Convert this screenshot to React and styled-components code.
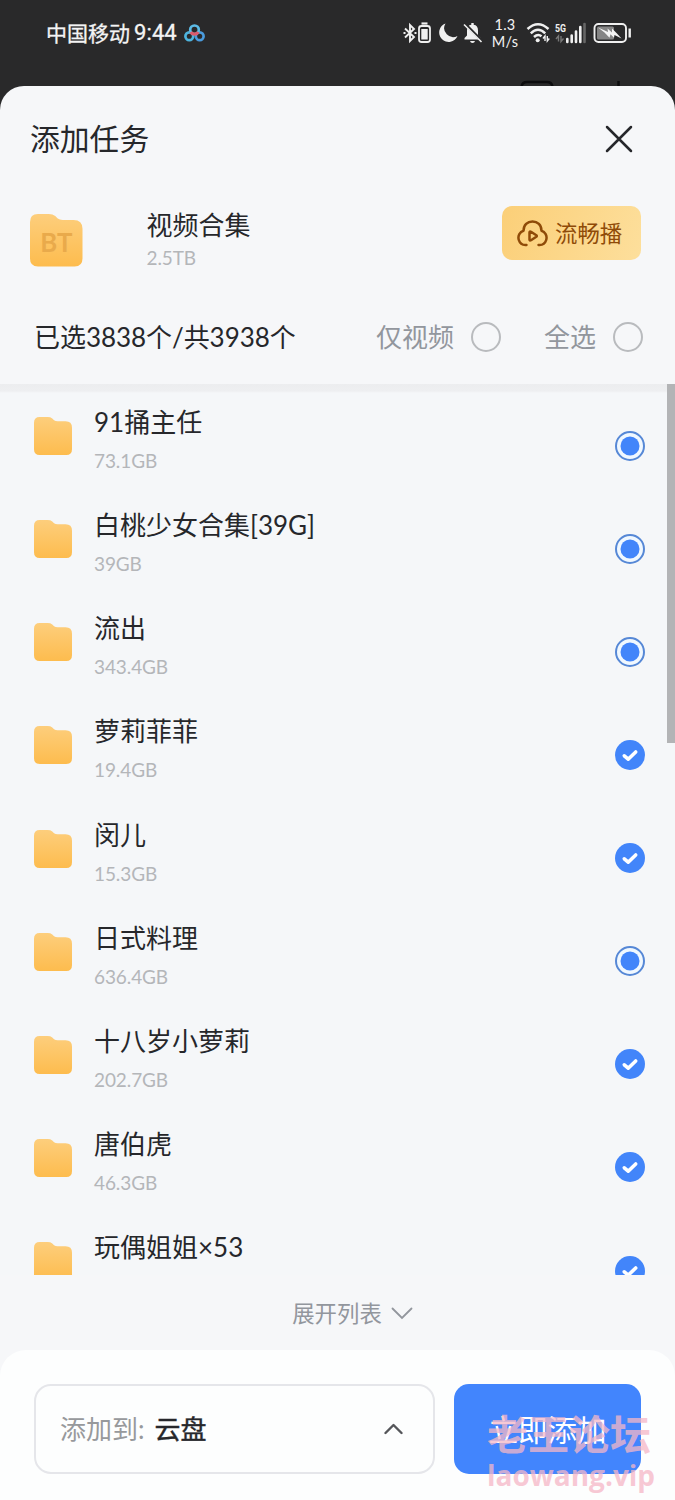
import styled, { createGlobalStyle } from "styled-components";

const GlobalStyle = createGlobalStyle`
  * {
    box-sizing: border-box;
  }

  body {
    margin: 0;
    background-color: #29292a;
    font-family: Lato, "Noto Sans CJK SC", sans-serif;
    color: #26272b;
  }
`;

const Screen = styled.div`
  display: flex;
  flex-direction: column;
  position: relative;
  width: 675px;
  height: 1500px;
  overflow: hidden;
  background-color: #29292a;
`;

const StatusBar = styled.div`
  display: flex;
  align-items: center;
  height: 66px;
  padding: 0 43px 0 46px;
  color: #f4f4f4;
`;

const Carrier = styled.span`
  font-size: 21px;
  line-height: 30px;
  white-space: nowrap;
  -webkit-text-stroke: 0.3px #f4f4f4;
`;

const Clock = styled.span`
  margin: 0 7px 0 4px;
  font-family: Roboto, sans-serif;
  font-size: 22px;
  line-height: 30px;
  letter-spacing: 0.1px;
  -webkit-text-stroke: 0.3px #f4f4f4;
`;

const StatusIcons = styled.div`
  display: flex;
  align-items: center;
  margin-left: auto;
`;

const Speed = styled.div`
  width: 28px;
  margin: 0 7px 0 8px;
  font-size: 14.5px;
  line-height: 17px;
  text-align: center;
  letter-spacing: 0.2px;
`;

const HiddenToolbar = styled.div`
  display: flex;
  justify-content: flex-end;
  height: 20px;
  padding: 14px 52px 0 0;
`;

const Sheet = styled.div`
  display: flex;
  flex-direction: column;
  flex: 1;
  border-radius: 24px 24px 0 0;
  background-color: #f6f7f9;
`;

const Header = styled.div`
  display: flex;
  justify-content: space-between;
  align-items: center;
  height: 106px;
  padding: 0 42px 0 30px;
`;

const Title = styled.h1`
  margin: 0;
  font-size: 29.8px;
  line-height: 44px;
  font-weight: 400;
`;

const TaskInfo = styled.div`
  display: flex;
  align-items: flex-start;
  height: 108px;
  padding: 14px 34px 0 30px;
`;

const TaskText = styled.div`
  flex: 1;
  padding-top: 1px;
  margin-left: 64px;
`;

const Name = styled.div`
  font-size: 26px;
  line-height: 36px;
  white-space: nowrap;
`;

const Size = styled.div`
  margin-top: ${(props) => props.$gap}px;
  font-size: 19px;
  line-height: 24px;
  letter-spacing: -0.1px;
  color: #b4b6b9;
`;

const PlayButton = styled.button`
  display: flex;
  align-items: center;
  gap: 7px;
  width: 139px;
  height: 54px;
  padding: 0 0 0 15px;
  border: none;
  border-radius: 10px;
  background: linear-gradient(110deg, #fbcf78, #fddf9c);
  font-family: inherit;
  font-size: 22.4px;
  line-height: 32px;
  color: #8f4b08;
  white-space: nowrap;
`;

const PlayLabel = styled.span`
  padding-top: 2px;
`;

const SelectBar = styled.div`
  display: flex;
  align-items: center;
  height: 84px;
  padding: 0 32px 10px 34px;
  font-size: 26px;
  line-height: 38px;
`;

const Count = styled.span`
  flex: 1;
  letter-spacing: -0.05px;
  white-space: nowrap;
`;

const Option = styled.label`
  display: flex;
  align-items: center;
  gap: 17px;
  margin-left: 43px;
  color: #92969d;
`;

const EmptyCircle = styled.span`
  width: 30px;
  height: 30px;
  border: 2px solid #b9bbbe;
  border-radius: 50%;
`;

const List = styled.div`
  display: flex;
  height: 891px;
  overflow: hidden;
  background: linear-gradient(#ecedef, #eeeff1 7px, #f5f7f9 9px);
`;

const Rows = styled.div`
  flex: 1;
`;

const ScrollThumb = styled.div`
  width: 8px;
  height: 359px;
  background-color: #b3b4b6;
`;

const Row = styled.div`
  display: flex;
  align-items: flex-start;
  height: 103.125px;
  padding: 20px 22px 0 33.5px;
`;

const RowIcon = styled.div`
  height: 38px;
  margin-top: 13px;
`;

const FolderBadge = styled(RowIcon)`
  margin-top: 8px;
`;

const RowText = styled.div`
  flex: 1;
  margin-left: 22.500px;
`;

const Mark = styled.div`
  width: 30px;
  height: 30px;
  margin-top: 26.5px;
`;

const Expand = styled.div`
  display: flex;
  justify-content: center;
  align-items: center;
  gap: 9px;
  height: 75px;
  padding: 2px 0 0 30px;
  font-size: 22.4px;
  line-height: 32px;
  color: #92969d;
`;

const Footer = styled.div`
  display: flex;
  gap: 19px;
  flex: 1;
  padding: 34px 34px 0;
  border-radius: 26px 26px 0 0;
  background-color: #fdfefe;
`;

const Target = styled.div`
  display: flex;
  align-items: center;
  width: 401px;
  height: 90px;
  padding: 0 30px 0 24px;
  border: 2px solid #e5e6ea;
  border-radius: 17px;
  font-size: 26px;
  line-height: 38px;
`;

const TargetLabel = styled.span`
  color: #97999c;
`;

const TargetValue = styled.span`
  flex: 1;
  margin-left: 10px;
  -webkit-text-stroke: 0.4px #26272b;
`;

const AddButton = styled.button`
  width: 187px;
  height: 90px;
  padding: 0 0 2px;
  border: none;
  border-radius: 15px;
  background-color: #4285fd;
  font-family: inherit;
  font-size: 29.5px;
  color: #fff;
`;

const Watermark = styled.div`
  position: absolute;
  left: 487px;
  top: 1408px;
  font-family: "Open Sans", "Noto Sans CJK SC", sans-serif;
  font-weight: 700;
  color: rgba(245, 183, 199, 0.75);
  pointer-events: none;
`;

const WatermarkName = styled.div`
  font-size: 41px;
  line-height: 52px;
  white-space: nowrap;
`;

const WatermarkSite = styled.div`
  font-size: 28px;
  line-height: 30px;
`;

const files = [
  { name: "91捅主任", size: "73.1GB", partial: true },
  { name: "白桃少女合集[39G]", size: "39GB", partial: true },
  { name: "流出", size: "343.4GB", partial: true },
  { name: "萝莉菲菲", size: "19.4GB" },
  { name: "闵儿", size: "15.3GB" },
  { name: "日式料理", size: "636.4GB", partial: true },
  { name: "十八岁小萝莉", size: "202.7GB" },
  { name: "唐伯虎", size: "46.3GB" },
  { name: "玩偶姐姐×53", size: "" },
];

const Folder = ({ size, label }) => (
  <svg width={size} height={size} viewBox="0 0 53 53">
    <defs>
      <linearGradient id="folder" x1="0" y1="0" x2="0" y2="1">
        <stop offset="0" stopColor="#fdce7c" />
        <stop offset="1" stopColor="#fdbc4e" />
      </linearGradient>
    </defs>
    <path
      d="M8 0H19Q23 0 25.500 2L28 4.500Q30 6 33 6H44Q53 6 53 15V45Q53 53 45 53H8Q0 53 0 45V8Q0 0 8 0Z"
      fill="url(#folder)"
    />
    {label && (
      <text
        x="26.500"
        y="38.500"
        textAnchor="middle"
        fontFamily="Lato, sans-serif"
        fontSize="26"
        fontWeight="700"
        fill="#e9aa4b"
      >
        {label}
      </text>
    )}
  </svg>
);

const CheckMark = ({ partial }) => (
  <Mark>
    <svg width="30" height="30" viewBox="0 0 30 30" fill="none">
      {partial ? (
        <>
          <circle cx="15" cy="15" r="14" fill="#f0f8ff" stroke="#5688d6" strokeWidth="2" />
          <circle cx="15" cy="15" r="9.500" fill="#4285fa" />
        </>
      ) : (
        <>
          <circle cx="15" cy="15" r="15" fill="#4285fa" />
          <path
            d="M9.300 15.800L13.200 19.200L20.700 12"
            stroke="#fff"
            strokeWidth="3.600"
            strokeLinecap="round"
            strokeLinejoin="round"
          />
        </>
      )}
    </svg>
  </Mark>
);

const CloudDriveLogo = () => (
  <svg width="21" height="18" viewBox="0 0 21 18" fill="none" strokeWidth="2.700">
    <circle cx="5.300" cy="12.200" r="3.900" stroke="#4db4de" />
    <circle cx="15.700" cy="12.200" r="3.900" stroke="#4a9bdd" />
    <circle cx="10.500" cy="5.800" r="4.300" stroke="#5cbbe6" />
    <path d="M6.800 8Q8 10.200 10.500 10.200T14.200 8" stroke="#dc5a6c" strokeWidth="3.200" />
  </svg>
);

const DeviceIcons = () => (
  <svg width="80" height="24" viewBox="0 0 80 24" fill="none" stroke="#f0f0f0">
    {/* bluetooth */}
    <path d="M2 7.500L11 16L7 20V4L11 8L2 16.500" strokeWidth="1.900" />
    <path d="M0.500 12H2.500M11.500 12H13.500" strokeWidth="2" />
    {/* device battery */}
    <rect x="16" y="5" width="11" height="16" rx="2.500" strokeWidth="1.800" />
    <path d="M18.500 2.500H24.500" strokeWidth="2.200" />
    <rect x="18.300" y="8" width="6.400" height="10.500" fill="#f0f0f0" stroke="none" />
    {/* do not disturb */}
    <path
      d="M42.500 2.500A9.500 9.500 0 1 0 54.500 15A9 9 0 0 1 42.500 2.500Z"
      fill="#f0f0f0"
      stroke="none"
    />
    {/* muted bell */}
    <path
      d="M61.500 18.500V17L64 14.500V9.500Q64 4.500 68.300 3.800V2H70.700V3.800Q75 4.500 75 9.500V14.500L77.500 17V18.500ZM67 20H72Q71.500 22 69.500 22T67 20Z"
      fill="#f0f0f0"
      stroke="none"
    />
    <path d="M61.500 2.500L79.500 20.500" stroke="#29292a" strokeWidth="3" />
    <path d="M61 3.500L78.500 21" strokeWidth="1.600" />
  </svg>
);

const NetworkIcons = () => (
  <svg width="106" height="24" viewBox="0 0 106 24" fill="none" stroke="#f0f0f0">
    {/* wifi */}
    <path
      d="M1.500 8Q12 -1.500 22.500 8M4.800 12.300Q12 5.300 19.200 12.300M8 16Q12 12.300 15.500 15.300"
      strokeWidth="2.500"
    />
    <circle cx="11.700" cy="19.200" r="2" fill="#f0f0f0" stroke="none" />
    <path d="M19 20V15L17 17.500M21.300 15V20L23.300 17.500" strokeWidth="1.400" />
    {/* cellular */}
    <text
      x="29"
      y="10.500"
      fontFamily="Roboto, sans-serif"
      fontSize="11.500"
      fontWeight="700"
      textLength="11"
      lengthAdjust="spacingAndGlyphs"
      fill="#f0f0f0"
      stroke="none"
    >
      5G
    </text>
    <path d="M32.500 20.500V15L30 18M35 15V20.500L37.500 17.500" stroke="#777" strokeWidth="1.400" />
    <path
      d="M41.300 21V18M45.700 21V14.500M50 21V10.500M54.300 21V6"
      strokeWidth="2.600"
      strokeLinecap="round"
    />
    <path d="M58.500 21V3" stroke="#666" strokeWidth="2.600" strokeLinecap="round" />
    {/* charging battery */}
    <rect x="68.500" y="3" width="31.500" height="18" rx="4" strokeWidth="1.900" />
    <rect x="71" y="5.500" width="17" height="13" rx="1.500" fill="#858585" stroke="none" />
    <path
      d="M72 6.500L82 11L81.500 7.500L86 11.500L86 7.500L90.500 12L95.500 17.500L88.500 14L88 16.800L84.500 13.300L83.500 16.800L78.500 11.500Z"
      fill="#f4f4f4"
      stroke="none"
    />
    <path d="M103.700 7.500V16.500" strokeWidth="2.400" />
  </svg>
);

const CloudPlayIcon = () => (
  <svg
    width="31"
    height="27"
    viewBox="0 0 31 27"
    fill="none"
    stroke="#8f4b08"
    strokeWidth="2.500"
    strokeLinecap="round"
    strokeLinejoin="round"
  >
    <path d="M9.500 25Q3.500 25.500 1.800 20C.5 15.500 3 11.700 6.500 10.800C6.500 5 10.500 1.500 15.500 1.500S24.500 5 24.500 10.800C28 11.700 30.500 15.500 29.200 20Q27.500 25.500 21.500 25" />
    <path d="M12.500 12.500Q12.500 11 14 11.800L19.300 15.200Q20.300 16 19.300 16.800L14 20.200Q12.500 21 12.500 19.500Z" />
  </svg>
);

const App = () => {
  return (
    <>
      <GlobalStyle />
      <Screen>
        <StatusBar>
          <Carrier>中国移动</Carrier>
          <Clock>9:44</Clock>
          <CloudDriveLogo />
          <StatusIcons>
            <DeviceIcons />
            <Speed>
              1.3
              <br />
              M/s
            </Speed>
            <NetworkIcons />
          </StatusIcons>
        </StatusBar>
        <HiddenToolbar>
          <svg width="103" height="6" viewBox="0 0 103 6" fill="none" stroke="#0c0c0e" strokeWidth="2.500">
            <path d="M1.500 8Q1.500 2 7 2H27Q32.500 2 32.500 8M98.500 1V6" />
          </svg>
        </HiddenToolbar>

        <Sheet>
          <Header>
            <Title>添加任务</Title>
            <svg width="28" height="28" viewBox="0 0 28 28" stroke="#26272b" strokeWidth="2.500" strokeLinecap="round">
              <path d="M2 2L26 26M26 2L2 26" />
            </svg>
          </Header>

          <TaskInfo>
            <FolderBadge>
              <Folder size={52.5} label="BT" />
            </FolderBadge>
            <TaskText>
              <Name>视频合集</Name>
              <Size $gap={3}>2.5TB</Size>
            </TaskText>
            <PlayButton>
              <CloudPlayIcon />
              <PlayLabel>流畅播</PlayLabel>
            </PlayButton>
          </TaskInfo>

          <SelectBar>
            <Count>已选3838个/共3938个</Count>
            <Option>
              仅视频
              <EmptyCircle />
            </Option>
            <Option>
              全选
              <EmptyCircle />
            </Option>
          </SelectBar>

          <List>
            <Rows>
              {files.map((file) => (
                <Row key={file.name}>
                  <RowIcon>
                    <Folder size={38} />
                  </RowIcon>
                  <RowText>
                    <Name>{file.name}</Name>
                    <Size $gap={9}>{file.size}</Size>
                  </RowText>
                  <CheckMark partial={file.partial} />
                </Row>
              ))}
            </Rows>
            <ScrollThumb />
          </List>

          <Expand>
            展开列表
            <svg width="22" height="14" viewBox="0 0 22 14" fill="none" stroke="#92969d" strokeWidth="1.800" strokeLinecap="round">
              <path d="M1.500 1.500L11 11L20.500 1.500" />
            </svg>
          </Expand>

          <Footer>
            <Target>
              <TargetLabel>添加到:</TargetLabel>
              <TargetValue>云盘</TargetValue>
              <svg width="19" height="12" viewBox="0 0 19 12" fill="none" stroke="#55565a" strokeWidth="2.400" strokeLinecap="round" strokeLinejoin="round">
                <path d="M1.500 10L9.500 2L17.500 10" />
              </svg>
            </Target>
            <AddButton>立即添加</AddButton>
          </Footer>
        </Sheet>

        <Watermark>
          <WatermarkName>老王论坛</WatermarkName>
          <WatermarkSite>laowang.vip</WatermarkSite>
        </Watermark>
      </Screen>
    </>
  );
};

export default App;
